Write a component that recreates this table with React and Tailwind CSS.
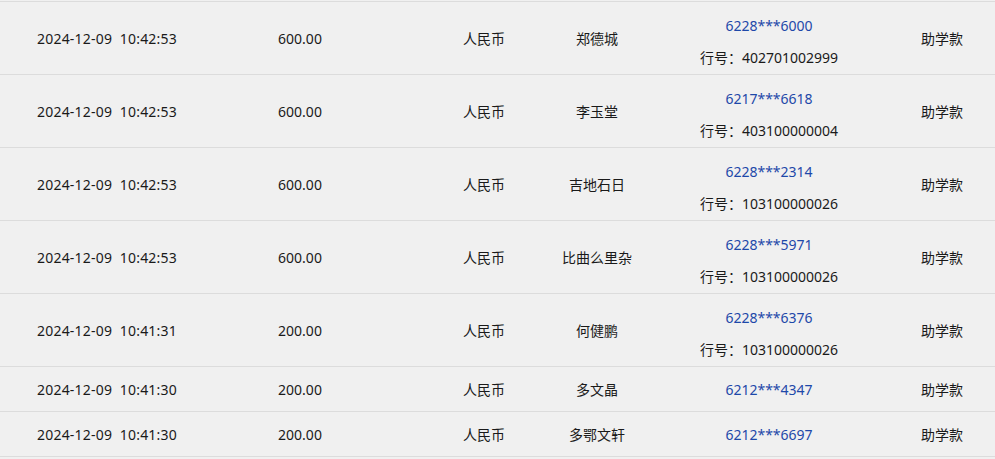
import React from 'react';

const rows = [
  { time: '2024-12-09\u00a0\u00a010:42:53', amount: '600.00', name: '郑德城', card: '6228***6000', bank: '402701002999' },
  { time: '2024-12-09\u00a0\u00a010:42:53', amount: '600.00', name: '李玉堂', card: '6217***6618', bank: '403100000004' },
  { time: '2024-12-09\u00a0\u00a010:42:53', amount: '600.00', name: '吉地石日', card: '6228***2314', bank: '103100000026' },
  { time: '2024-12-09\u00a0\u00a010:42:53', amount: '600.00', name: '比曲么里杂', card: '6228***5971', bank: '103100000026' },
  { time: '2024-12-09\u00a0\u00a010:41:31', amount: '200.00', name: '何健鹏', card: '6228***6376', bank: '103100000026' },
  { time: '2024-12-09\u00a0\u00a010:41:30', amount: '200.00', name: '多文晶', card: '6212***4347' },
  { time: '2024-12-09\u00a0\u00a010:41:30', amount: '200.00', name: '多鄂文轩', card: '6212***6697' },
];

const Row = ({ row }) => {
  const tall = !!row.bank;
  return (
    <div
      className={`grid grid-cols-[214px_172px_152px_118px_226px_1fr] items-center border-t border-[#dcdcdc] text-center whitespace-nowrap ${tall ? 'h-[73px]' : 'h-[45px]'}`}
    >
      <div className="tracking-[0.2px]">{row.time}</div>
      <div>{row.amount}</div>
      <div className="pl-[44px]">人民币</div>
      <div>{row.name}</div>
      {tall ? (
        <div className="flex flex-col items-center self-start pt-[8px]">
          <span className="leading-[32px] text-[#1e48a9]">{row.card}</span>
          <span className="leading-[32px]">行号：{row.bank}</span>
        </div>
      ) : (
        <div className="text-[#1e48a9]">{row.card}</div>
      )}
      <div className="pl-[7px]">助学款</div>
    </div>
  );
};

export default function App() {
  return (
    <div className="w-[995px] h-[459px] overflow-hidden bg-[#f0f0f0] pt-px text-[14px] text-[#1a1a1a] font-['Noto_Sans','Noto_Sans_CJK_SC',sans-serif]">
      <div className="border-b border-[#dcdcdc]">
        {rows.map((row, i) => (
          <Row key={i} row={row} />
        ))}
      </div>
    </div>
  );
}
